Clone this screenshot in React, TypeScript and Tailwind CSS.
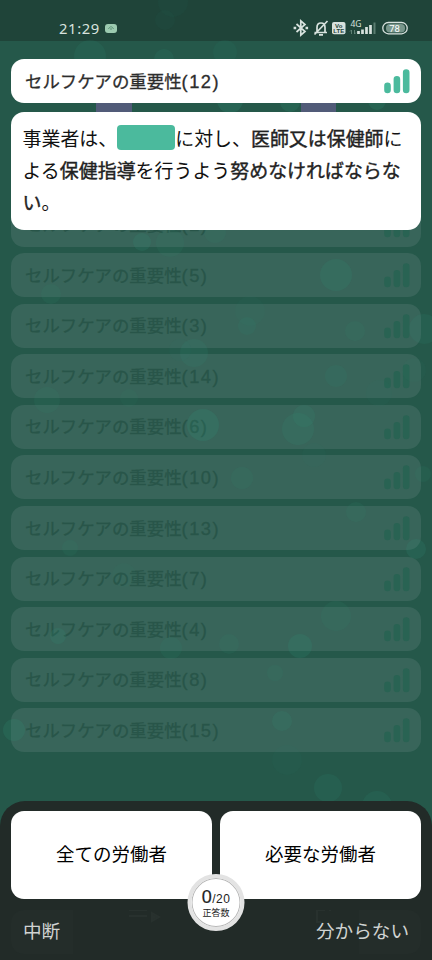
import React from "react";

const rows = [
  { n: 2 },
  { n: 5 },
  { n: 3 },
  { n: 14 },
  { n: 6 },
  { n: 10 },
  { n: 13 },
  { n: 7 },
  { n: 4 },
  { n: 8 },
  { n: 15 },
];

// cx, cy, r, opacity
const bubbles = [
  [173, 2, 15, 0.05],
  [165, 20, 10, 0.05],
  [90, 56, 16, 0.12],
  [164, 59, 10, 0.13],
  [225, 52, 12, 0.09],
  [230, 100, 13, 0.22],
  [290, 102, 10, 0.18],
  [377, 101, 9, 0.18],
  [142, 242, 9, 0.16],
  [170, 243, 14, 0.1],
  [215, 232, 11, 0.08],
  [51, 294, 10, 0.1],
  [336, 275, 16, 0.15],
  [250, 311, 15, 0.04],
  [247, 326, 9, 0.11],
  [355, 331, 10, 0.1],
  [424, 329, 15, 0.12],
  [194, 353, 14, 0.12],
  [180, 350, 11, 0.05],
  [336, 376, 11, 0.11],
  [414, 370, 12, 0.04],
  [379, 393, 13, 0.05],
  [47, 400, 13, 0.1],
  [129, 398, 9, 0.06],
  [203, 425, 16, 0.19],
  [304, 416, 11, 0.14],
  [298, 429, 16, 0.14],
  [314, 455, 12, 0.05],
  [242, 478, 11, 0.1],
  [423, 474, 8, 0.1],
  [356, 512, 10, 0.1],
  [416, 549, 10, 0.16],
  [70, 548, 8, 0.1],
  [124, 575, 12, 0.04],
  [336, 616, 15, 0.1],
  [58, 636, 8, 0.16],
  [171, 648, 11, 0.11],
  [229, 644, 10, 0.08],
  [300, 646, 12, 0.17],
  [275, 673, 8, 0.1],
  [282, 721, 10, 0.14],
  [14, 730, 11, 0.18],
  [287, 760, 15, 0.05],
  [328, 788, 14, 0.13],
  [377, 806, 15, 0.13],
];

const Bars = ({ color }: { color: string }) => (
  <svg width="27" height="26" viewBox="0 0 27 26" className={color}>
    <g stroke="currentColor" strokeWidth="6.6" strokeLinecap="round">
      <path d="M3.500 17.800v4.200M12.900 11.300V22M22.200 4.500V22" />
    </g>
  </svg>
);

const Title = ({ n }: { n: number }) => (
  <span className="text-[17.4px] leading-6 whitespace-nowrap [-webkit-text-stroke:0.3px]">
    セルフケアの重要性
    <span className="font-['Liberation_Sans'] text-[18.3px] tracking-[1.5px]">
      ({n})
    </span>
  </span>
);

const StatusBar = () => (
  <header className="flex h-[41px] shrink-0 items-end justify-between bg-[#1f4439] pr-[24px] pb-[3px] pl-[59px] text-[#d8e2de]">
    <div className="flex h-5 items-center gap-[5px]">
      <span className="font-['Noto_Sans'] text-[14.8px] leading-5 tracking-[0.6px]">
        21:29
      </span>
      <span className="flex h-[9px] w-[12px] items-center justify-center rounded-[3px] bg-[#9ccbb0]">
        <svg width="6" height="4" viewBox="0 0 6 4" fill="none">
          <path d="M.5 3C2 0 4 0 5.500 3M2 3h2" stroke="#5b9276" />
        </svg>
      </span>
    </div>
    <svg width="116" height="20" viewBox="292 18 116 20" fill="none">
      <g stroke="currentColor" strokeWidth="1.7">
        <path d="M296.500 24l8.500 7.500-4.200 3.700V20.800l4.200 3.700-8.500 7.500" />
        <path d="M293.600 28h2.600M305.500 28h2.600" strokeWidth="2.400" />
        <path d="M314.500 32.500h12.500M317 32.500v-5c0-6 8-6 8 0v5M314.500 34.500L327.500 21M319 34.800h4" />
      </g>
      <rect x="332" y="22" width="13.500" height="12.300" rx="2" fill="currentColor" />
      <g className="font-['Liberation_Sans'] font-bold" fill="#1f4439">
        <text x="338.700" y="27.800" fontSize="6" textAnchor="middle">
          Vo
        </text>
        <text x="338.700" y="33.200" fontSize="6" textAnchor="middle">
          LTE
        </text>
      </g>
      <text
        x="350.500"
        y="26.800"
        fontSize="8.500"
        fill="currentColor"
        className="font-['Noto_Sans']"
      >
        4G
      </text>
      <path
        d="M351.500 30v4m-1.500-2.500l1.500-1.500M354.500 34v-4m0 4l1.500-1.500"
        stroke="#6f8f84"
        strokeWidth=".8"
      />
      <g stroke="currentColor" strokeWidth="2.700">
        <path d="M358.500 31V34M362.500 29.500V34M366.500 27V34M370.500 25V34" />
        <path d="M374.500 22.500V34" stroke="#5a7c70" strokeWidth="2" />
      </g>
      <rect x="386" y="24" width="19" height="8.500" rx="4" fill="#78968b" />
      <rect x="382.800" y="22.500" width="24.400" height="11.300" rx="5.600" stroke="currentColor" strokeWidth="1.300" />
      <text
        x="394.500"
        y="31.800"
        fontSize="9.500"
        textAnchor="middle"
        fill="#fff"
        className="font-['Roboto']"
      >
        78
      </text>
    </svg>
  </header>
);

const Question = () => (
  <section className="relative z-10 mt-[9px] h-[117.500px] rounded-[13px] bg-white px-[11.5px] pt-[10px] text-[18.95px] leading-8 text-[#111] [&_b]:font-normal [&_b]:text-[#222] [&_b]:[-webkit-text-stroke:0.4px]">
    <div className="flex items-center whitespace-nowrap">
      <span>事業者は、</span>
      <span className="h-[25px] w-[58px] shrink-0 -translate-y-px rounded-[4px] bg-[#4bba9d]" />
      <span>
        に対し、<b>医師又は保健師</b>に
      </span>
    </div>
    <div className="whitespace-nowrap">
      よる<b>保健指導</b>を行うよう<b>努めなければならな</b>
    </div>
    <div>
      <b>い</b>。
    </div>
  </section>
);

const AnswerPanel = () => (
  <footer className="relative z-20 mt-auto h-[159px] shrink-0 rounded-t-[25px] bg-[#222b28] px-[11px] pt-[10px]">
    <div className="grid grid-cols-2 gap-[8px] text-[18.5px] text-black">
      {["全ての労働者", "必要な労働者"].map((answer) => (
        <button
          key={answer}
          className="h-[88px] rounded-[13px] bg-white pb-0.5"
        >
          {answer}
        </button>
      ))}
    </div>
    <div className="mt-[11px] flex justify-between text-[18.6px] leading-[40px] text-[#d0d3d2]">
      <div className="h-[44px] w-[62px] rounded-l-[13px] bg-[#242d2a] pl-3 whitespace-nowrap">
        中断
      </div>
      {/* covered menu icons, barely showing through the panel */}
      <svg width="230" height="44" viewBox="0 0 230 44" fill="none">
        <g stroke="#28312e" strokeWidth="2">
          <path d="M28 0h18M28 6h18" />
          <path d="M51 3l7 4-7 4z" fill="#28312e" />
          <path d="M224 0h-8v12h4M228 0h5v12h-3" />
        </g>
      </svg>
      <div className="flex h-[44px] w-[62px] justify-end rounded-r-[13px] bg-[#242d2a] pr-3 whitespace-nowrap">
        分からない
      </div>
    </div>
    <div className="absolute top-[73px] left-1/2 flex size-[57px] -translate-x-1/2 flex-col items-center rounded-full border-[4px] border-[#e3e3e3] bg-white pt-[9.5px] text-[#222] shadow-[inset_0_0_0_1px_#b8b8b8]">
      <div className="font-['Liberation_Sans'] text-[12px] leading-[18px] tracking-[0.5px]">
        <span className="text-[18px] [-webkit-text-stroke:0.2px]">0</span>/20
      </div>
      <div className="text-[9px] leading-[9px]">正答数</div>
    </div>
  </footer>
);

const App = () => {
  return (
    <div className="relative flex h-[960px] w-[432px] flex-col overflow-hidden bg-[#25584a] font-['Noto_Sans_CJK_JP',sans-serif]">
      <StatusBar />
      <div className="absolute top-[100px] left-[96px] h-4 w-[36px] bg-[#515b78]" />
      <div className="absolute top-[100px] left-[301px] h-4 w-[35px] bg-[#515b78]" />
      <main className="px-[11px] pt-[18px]">
        <div className="relative z-10 flex h-[44px] items-center justify-between rounded-[13px] bg-white pr-[10px] pl-[14px] text-[#2d2d2d]">
          <Title n={12} />
          <Bars color="text-[#4bba9d]" />
        </div>
        <Question />
        <ul className="-mt-[27px] flex flex-col gap-[6.6px]">
          {rows.map(({ n }) => (
            <li
              key={n}
              className="flex h-[44px] items-center justify-between rounded-[13px] bg-[#38655a] pr-[10px] pl-[14px] text-[#285549]"
            >
              <Title n={n} />
              <Bars color="text-[#296353]" />
            </li>
          ))}
        </ul>
      </main>
      <svg
        className="pointer-events-none absolute inset-0"
        width="432"
        height="960"
        fill="#31937a"
      >
        {bubbles.map(([cx, cy, r, opacity]) => (
          <circle key={`${cx}-${cy}`} cx={cx} cy={cy} r={r} opacity={opacity} />
        ))}
      </svg>
      <AnswerPanel />
    </div>
  );
};

export default App;
